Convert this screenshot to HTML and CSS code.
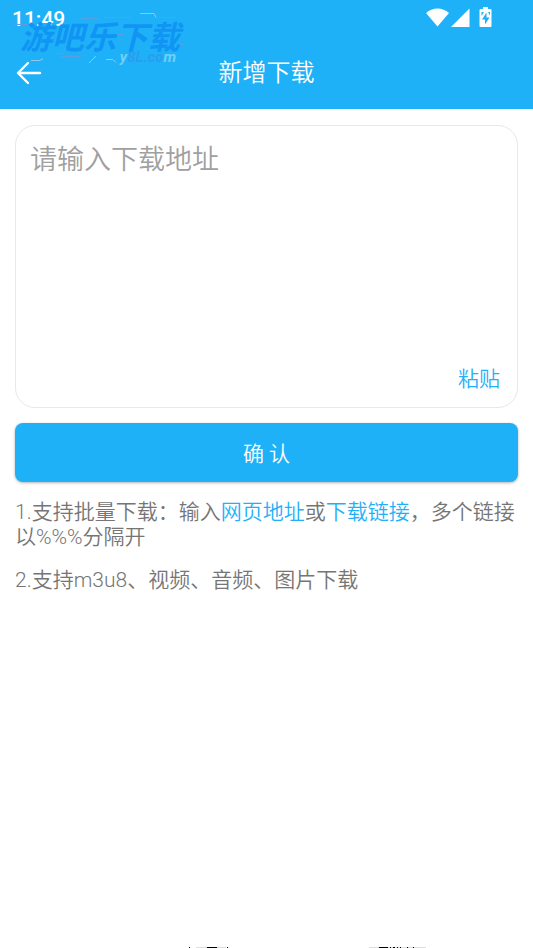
FILE: index.html
```html
<!DOCTYPE html>
<html lang="zh-CN">
<head>
<meta charset="utf-8">
<meta name="viewport" content="width=device-width, initial-scale=1">
<title>新增下载</title>
<link rel="stylesheet" href="styles.css">
</head>
<body>
<div class="screen">
  <header class="header">
    <div class="status">
      <span class="time">11:49</span>
      <svg class="status-icons" width="68" height="24" viewBox="0 0 68 24" fill="#fff" aria-hidden="true">
        <path d="M0 8C6.500 2 16.500 2 23 8L11.500 21.500Z"/>
        <path d="M25 22L43.500 3.500V22Z"/>
        <path fill-rule="evenodd" d="M57 2h5V4h2.500q1 0 1 1V21q0 1-1 1h-10q-1 0-1-1V5q0-1 1-1H57ZM60.500 7.500L56 14.500h3v5l4.500-7h-3ZM55.500 7h2.500l-2.500 4ZM62 7h2v3.500Z"/>
      </svg>
    </div>
    <div class="toolbar">
      <button class="back" type="button" aria-label="返回">
        <svg width="26" height="24" viewBox="0 0 26 24" fill="none" stroke="#fff" stroke-width="2.400" stroke-linecap="round" stroke-linejoin="round"><path d="M12 2L2 12l10 10M2 12h22"/></svg>
      </button>
      <h1 class="title">新增下载</h1>
    </div>
    <div class="watermark">
      <svg class="traces" width="190" height="60" viewBox="0 0 190 60" fill="none" aria-hidden="true">
        <path stroke="#8dc7ef" d="M140 5.500h14l2 4M31 52.500h9l3-2M89 55l7-7M106 51.500h7l3 3"/>
        <path stroke="#5b9fe0" d="M81 10.500h17M105 9.500h26M159 9.500h17M14 16.500h13M55 45.500h9M61 48.500h20M118 26.500h6M180 36.500h4"/>
      </svg>
      <span class="brand">游吧乐下载</span>
      <span class="domain">y<span class="domain-mid">8L.co</span>m</span>
    </div>
  </header>
  <main class="content">
    <form class="form">
      <div class="box">
        <textarea class="address" aria-label="下载地址" placeholder="请输入下载地址"></textarea>
        <button class="paste" type="button">粘贴</button>
      </div>
      <button class="confirm" type="button">确 认</button>
    </form>
    <p class="note">1.支持批量下载：输入<a href="#">网页地址</a>或<a href="#">下载链接</a>，多个链接以%%%分隔开</p>
    <p class="note">2.支持m3u8、视频、音频、图片下载</p>
  </main>
  <svg class="edge" width="240" height="1" viewBox="0 0 240 1" aria-hidden="true">
    <path fill="#ddd" d="M10 0h30v1h-30zM183 0h57v1h-57z"/>
    <path fill="#000" d="M3 0h1v1h-1zM21 0h10v1h-10zM41 0h1v1h-1zM193 0h9v1h-9zM204 0h1v1h-1zM207 0h2v1h-2zM211 0h1v1h-1zM214 0h1v1h-1zM221 0h1v1h-1zM227 0h1v1h-1z"/>
  </svg>
</div>
</body>
</html>
```
FILE: styles.css
```css
* { box-sizing: border-box; }
body {
  margin: 0;
  background: #fff;
  color: #757575;
  font-family: Roboto, "Noto Sans CJK SC", sans-serif;
  font-weight: 350;
}
button, textarea { font: inherit; border: 0; padding: 0; background: none; }
.screen { display: flex; flex-direction: column; min-height: 100vh; }
.header { position: relative; background: #1fb1f7; color: #fff; }
.status { display: flex; justify-content: space-between; padding: 5px 39px 0 12px; height: 36px; }
.time { font-size: 21px; line-height: 28px; font-weight: 500; }
.toolbar { display: grid; grid-template-columns: 48px 1fr 48px; align-items: center; height: 73px; padding: 0 12px; }
.back { display: flex; align-items: center; height: 48px; padding-left: 4px; }
.title { margin: 0; text-align: center; font-size: 24px; line-height: 32px; font-weight: 350; }
.watermark { position: absolute; left: 0; top: 8px; width: 190px; height: 60px; pointer-events: none; }
.traces { position: absolute; left: 0; top: 0; }
.brand { position: absolute; left: 20px; top: 8px; font-size: 32px; line-height: 44px; font-weight: 700; font-style: italic; color: #1195f5; white-space: nowrap; }
.domain { position: absolute; right: 14px; top: 40px; font-size: 15px; line-height: 18px; font-weight: 700; font-style: italic; color: #6cd0fa; }
.domain-mid { color: #2a9df0; }
.content { flex: 1; padding: 16px 15px; }
.form { display: flex; flex-direction: column; gap: 15px; }
.box { display: flex; flex-direction: column; height: 283px; padding: 14px; border: 1px solid #e8e8e8; border-radius: 20px; }
.address { flex: 1; width: 100%; resize: none; outline: 0; font-size: 27px; line-height: 40px; color: #333; }
.address::placeholder { color: #a0a0a0; opacity: 1; }
.paste { align-self: flex-end; padding: 0 3px; font-size: 21px; line-height: 28px; color: #1fb1f7; }
.confirm { height: 59px; padding-bottom: 2px; border-radius: 8px; background: #1fb1f7; color: #fff; font-size: 21px; box-shadow: 0 1px 3px rgba(0, 0, 0, .3); }
.note { margin: 18px 0; font-size: 21px; line-height: 25px; }
.note a { color: #1fb1f7; text-decoration: none; }
.edge { display: block; margin-left: 186px; }
```
